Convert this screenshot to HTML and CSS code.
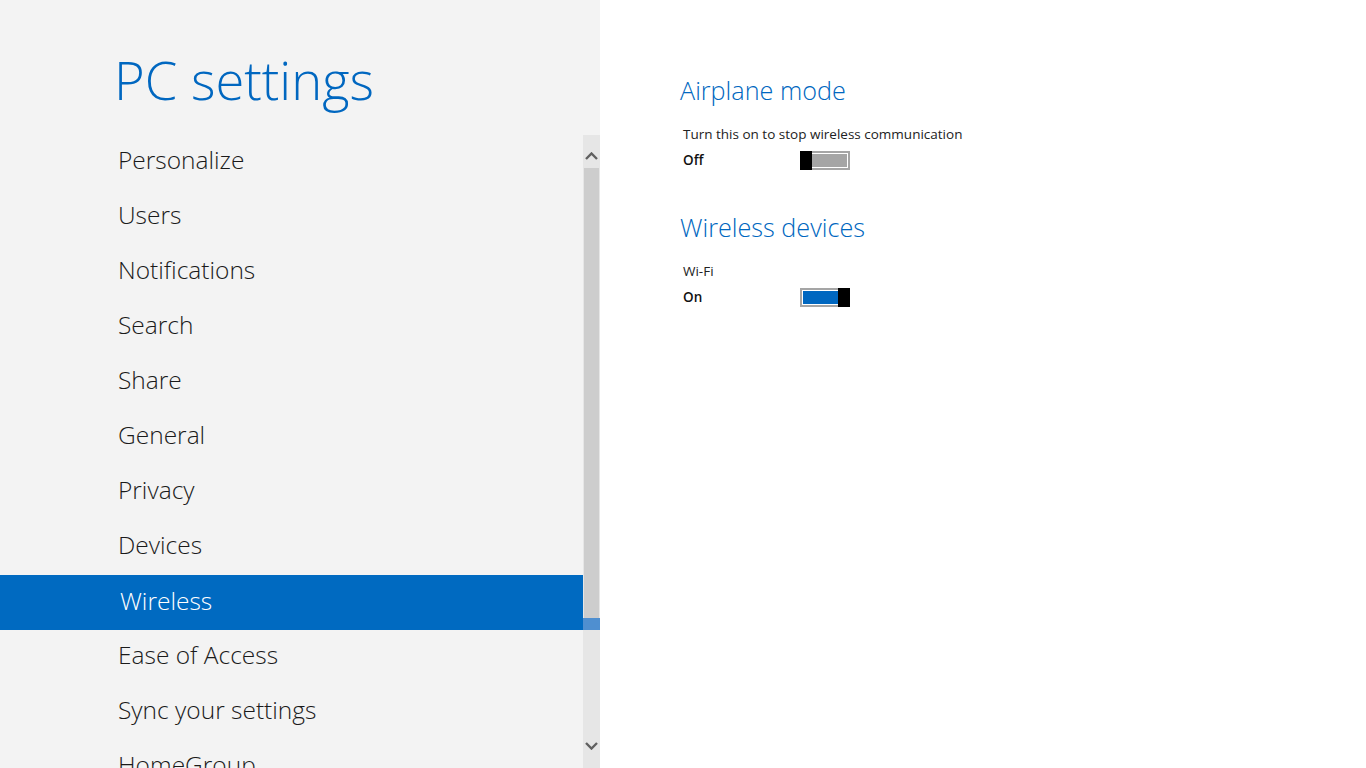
FILE: index.html
```html
<!DOCTYPE html>
<html>
<head>
<meta charset="utf-8">
<link rel="stylesheet" href="styles.css">
</head>
<body>
<div class="screen">
  <div class="left">
    <h1 class="title">PC settings</h1>
    <div class="navwrap">
      <ul class="nav">
        <li>Personalize</li>
        <li>Users</li>
        <li>Notifications</li>
        <li>Search</li>
        <li>Share</li>
        <li>General</li>
        <li>Privacy</li>
        <li>Devices</li>
        <li class="sel">Wireless</li>
        <li>Ease of Access</li>
        <li>Sync your settings</li>
        <li>HomeGroup</li>
      </ul>
      <div class="scrollbar">
        <div class="sb-btn up"><svg width="13" height="8" viewBox="0 0 13 8"><path d="M1 7 L6.5 1.5 L12 7" fill="none" stroke="#606060" stroke-width="2.4"/></svg></div>
        <div class="sb-thumb"></div>
        <div class="sb-selpart"></div>
        <div class="sb-rest"></div>
        <div class="sb-btn down"><svg width="13" height="8" viewBox="0 0 13 8"><path d="M1 1 L6.5 6.5 L12 1" fill="none" stroke="#606060" stroke-width="2.4"/></svg></div>
      </div>
    </div>
  </div>
  <div class="right">
    <section class="group">
      <h2 class="heading">Airplane mode</h2>
      <div class="desc">Turn this on to stop wireless communication</div>
      <div class="row">
        <span class="state">Off</span>
        <div class="toggle off"><div class="knob"></div><div class="track"><div class="fill"></div></div></div>
      </div>
    </section>
    <section class="group second">
      <h2 class="heading">Wireless devices</h2>
      <div class="desc">Wi-Fi</div>
      <div class="row">
        <span class="state">On</span>
        <div class="toggle on"><div class="track"><div class="fill"></div></div><div class="knob"></div></div>
      </div>
    </section>
  </div>
</div>
</body>
</html>
```

FILE: styles.css
```css
html, body {
  margin: 0;
  padding: 0;
  background: #ffffff;
}
body {
  font-family: "Segoe UI", "Open Sans", "Noto Sans", sans-serif;
}
.screen {
  display: flex;
  width: 1366px;
  height: 768px;
  overflow: hidden;
}
.left {
  width: 600px;
  height: 768px;
  background: #f3f3f3;
  display: flex;
  flex-direction: column;
  overflow: hidden;
}
.title {
  margin: 0;
  padding: 43px 0 0 114px;
  box-sizing: border-box;
  height: 135px;
  font-weight: 300;
  font-size: 52.5px;
  line-height: 74px;
  color: #0067c0;
}
.navwrap {
  display: flex;
  flex: 1;
  min-height: 0;
}
.nav {
  list-style: none;
  margin: 0;
  padding: 0;
  width: 583px;
}
.nav li {
  height: 55px;
  line-height: 49px;
  padding-left: 118px;
  font-size: 24.5px;
  font-weight: 300;
  color: #1a1a1a;
  white-space: nowrap;
}
.nav li.sel {
  background: #006ac1;
  color: #ffffff;
  padding-left: 120px;
  line-height: 51px;
}
.scrollbar {
  width: 17px;
  display: flex;
  flex-direction: column;
  background: #e6e6e6;
}
.sb-btn {
  height: 33px;
  box-sizing: border-box;
  display: flex;
  align-items: flex-start;
  justify-content: center;
}
.sb-btn.up {
  padding-top: 17px;
}
.sb-thumb {
  height: 450px;
  margin: 0 1px;
  background: #cdcdcd;
}
.sb-selpart {
  height: 12px;
  background: #4f8fd0;
}
.sb-rest {
  flex: 1;
}
.sb-btn.down {
  height: 26px;
}
.right {
  flex: 1;
  padding: 70px 0 0 80px;
}
.heading {
  margin: 0;
  font-weight: 300;
  font-size: 25.2px;
  line-height: 40px;
  color: #0067c0;
}
.desc {
  margin-top: 14px;
  padding-left: 3px;
  font-size: 13.5px;
  line-height: 20px;
  color: #222222;
}
.row {
  display: flex;
  align-items: center;
  margin-top: 3px;
  padding-left: 3px;
  height: 26px;
}
.state {
  width: 117px;
  font-size: 13.5px;
  font-weight: 600;
  color: #111111;
}
.group.second {
  margin-top: 34px;
}
.toggle {
  display: flex;
  width: 50px;
  height: 19px;
}
.knob {
  width: 12px;
  height: 19px;
  background: #000000;
}
.track {
  flex: 1;
  border: 2px solid #a5a5a5;
  background: #ffffff;
  padding: 1px;
}
.toggle.on .track {
  border-right: none;
  padding-right: 0;
}
.toggle.off .track {
  border-left: none;
  padding-left: 0;
}
.fill {
  height: 100%;
  background: #a5a5a5;
}
.toggle.on .fill {
  background: #0067c0;
}
```
